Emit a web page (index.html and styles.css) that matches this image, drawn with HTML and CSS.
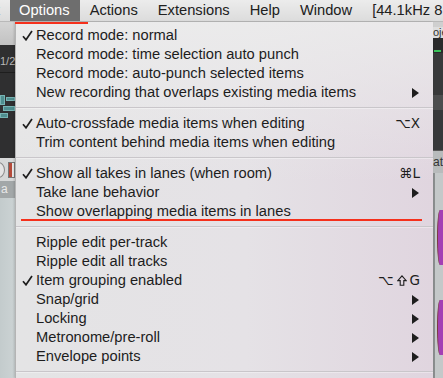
FILE: index.html
```html
<!DOCTYPE html>
<html>
<head>
<meta charset="utf-8">
<link rel="stylesheet" href="styles.css">
</head>
<body>
<div class="screen">
  <div class="menubar">
    <span class="mb-item mb-cut">k</span>
    <span class="mb-item mb-active">Options</span>
    <span class="mb-item">Actions</span>
    <span class="mb-item">Extensions</span>
    <span class="mb-item">Help</span>
    <span class="mb-item">Window</span>
    <span class="mb-item">[44.1kHz 8</span>
    <span class="mb-underline"></span>
  </div>
  <div class="main">
    <div class="left-strip">
      <div class="ls-top"></div>
      <div class="ls-dark">
        <div class="ls-frac">1/2</div>
        <div class="ls-teal">
          <span class="t1"></span><span class="t2"></span><span class="t3"></span><span class="t4"></span>
        </div>
      </div>
      <div class="ls-ctrl"><span class="ls-circle"></span><span class="ls-box"></span></div>
      <div class="ls-band">a</div>
      <div class="ls-rest"></div>
    </div>

    <div class="menu">
      <div class="row"><span class="chk"><svg width="11" height="11" viewBox="0 0 11 11"><path d="M1 6.2 L4 9.8 L10 1" fill="none" stroke="#1e1e1e" stroke-width="1.7"/></svg></span><span class="label">Record mode: normal</span></div>
      <div class="row"><span class="chk"></span><span class="label">Record mode: time selection auto punch</span></div>
      <div class="row"><span class="chk"></span><span class="label">Record mode: auto-punch selected items</span></div>
      <div class="row"><span class="chk"></span><span class="label">New recording that overlaps existing media items</span><span class="arrow"><svg width="7" height="10" viewBox="0 0 7 10"><polygon points="0,0 7,5 0,10" fill="#1e1e1e"/></svg></span></div>
      <div class="sep"></div>
      <div class="row"><span class="chk"><svg width="11" height="11" viewBox="0 0 11 11"><path d="M1 6.2 L4 9.8 L10 1" fill="none" stroke="#1e1e1e" stroke-width="1.7"/></svg></span><span class="label">Auto-crossfade media items when editing</span><span class="key">⌥X</span></div>
      <div class="row"><span class="chk"></span><span class="label">Trim content behind media items when editing</span></div>
      <div class="sep"></div>
      <div class="row"><span class="chk"><svg width="11" height="11" viewBox="0 0 11 11"><path d="M1 6.2 L4 9.8 L10 1" fill="none" stroke="#1e1e1e" stroke-width="1.7"/></svg></span><span class="label">Show all takes in lanes (when room)</span><span class="key">⌘L</span></div>
      <div class="row"><span class="chk"></span><span class="label">Take lane behavior</span><span class="arrow"><svg width="7" height="10" viewBox="0 0 7 10"><polygon points="0,0 7,5 0,10" fill="#1e1e1e"/></svg></span></div>
      <div class="row row-marked"><span class="chk"></span><span class="label">Show overlapping media items in lanes</span><span class="red-mark"></span></div>
      <div class="sep"></div>
      <div class="row"><span class="chk"></span><span class="label">Ripple edit per-track</span></div>
      <div class="row"><span class="chk"></span><span class="label">Ripple edit all tracks</span></div>
      <div class="row"><span class="chk"><svg width="11" height="11" viewBox="0 0 11 11"><path d="M1 6.2 L4 9.8 L10 1" fill="none" stroke="#1e1e1e" stroke-width="1.7"/></svg></span><span class="label">Item grouping enabled</span><span class="key">⌥<svg class="shift" width="10" height="11" viewBox="0 0 10 11"><path d="M5 0.8 L9.2 5.6 L6.8 5.6 L6.8 10.2 L3.2 10.2 L3.2 5.6 L0.8 5.6 Z" fill="none" stroke="#1e1e1e" stroke-width="1.1" stroke-linejoin="miter"/></svg>G</span></div>
      <div class="row"><span class="chk"></span><span class="label">Snap/grid</span><span class="arrow"><svg width="7" height="10" viewBox="0 0 7 10"><polygon points="0,0 7,5 0,10" fill="#1e1e1e"/></svg></span></div>
      <div class="row"><span class="chk"></span><span class="label">Locking</span><span class="arrow"><svg width="7" height="10" viewBox="0 0 7 10"><polygon points="0,0 7,5 0,10" fill="#1e1e1e"/></svg></span></div>
      <div class="row"><span class="chk"></span><span class="label">Metronome/pre-roll</span><span class="arrow"><svg width="7" height="10" viewBox="0 0 7 10"><polygon points="0,0 7,5 0,10" fill="#1e1e1e"/></svg></span></div>
      <div class="row"><span class="chk"></span><span class="label">Envelope points</span><span class="arrow"><svg width="7" height="10" viewBox="0 0 7 10"><polygon points="0,0 7,5 0,10" fill="#1e1e1e"/></svg></span></div>
      <div class="sep"></div>
    </div>

    <div class="right-strip">
      <div class="rs-top"></div>
      <div class="rs-tab">oje</div>
      <div class="rs-wave"><span class="rs-green"></span></div>
      <div class="rs-d1"></div>
      <div class="rs-d2"></div>
      <div class="rs-d3"></div>
      <div class="rs-at">at</div>
      <div class="rs-lanes">
        <span class="purple p1"></span>
        <span class="purple p2"></span>
      </div>
    </div>
  </div>
</div>
</body>
</html>
```

FILE: styles.css
```css
html, body {
  margin: 0;
  padding: 0;
  background: #c9cfd0;
}

.screen {
  width: 443px;
  height: 378px;
  overflow: hidden;
  font-family: "Liberation Sans", Arial, sans-serif;
  color: #1d1d1d;
  display: flex;
  flex-direction: column;
}

/* ---------- menubar ---------- */
.menubar {
  position: relative;
  height: 22px;
  flex: 0 0 22px;
  display: flex;
  align-items: stretch;
  background: linear-gradient(#ececec, #dcdcdc);
  border-bottom: 1px solid #b9b9b9;
  box-sizing: border-box;
  font-size: 14.7px;
  white-space: nowrap;
}

.mb-item {
  padding: 0 10px;
  line-height: 21px;
  color: #202020;
}

.mb-cut {
  width: 15px;
  box-sizing: border-box;
  padding: 0 10px 0 0;
  text-align: right;
  overflow: hidden;
  direction: rtl;
}

.mb-active {
  padding: 0 10px 0 9px;
  background: #6e6e6e;
  color: #fff;
}

.mb-underline {
  position: absolute;
  left: 15px;
  top: 22px;
  width: 73px;
  height: 2px;
  background: #f5301c;
  z-index: 3;
}

/* ---------- main ---------- */
.main {
  flex: 1;
  display: flex;
  min-height: 0;
}

/* left strip */
.left-strip {
  width: 15px;
  flex: 0 0 15px;
  display: flex;
  flex-direction: column;
  overflow: hidden;
}

.ls-top {
  height: 23px;
  background: linear-gradient(#d4d4d4, #c2c2c2);
}

.ls-dark {
  height: 113px;
  background: #2f2f30;
  display: flex;
  flex-direction: column;
}

.ls-frac {
  margin-top: 9px;
  height: 14px;
  font-size: 11px;
  line-height: 14px;
  color: #b8b8b8;
  border-bottom: 1px solid #1e1e1e;
  padding-bottom: 4px;
  white-space: nowrap;
}

.ls-teal {
  margin-top: 22px;
  height: 24px;
  position: relative;
}

.ls-teal span {
  position: absolute;
  background: #4f8e8f;
  border: 1px solid #76b3b3;
  box-sizing: border-box;
}

.ls-teal .t1 { left: 0; top: 0; width: 5px; height: 10px; }
.ls-teal .t2 { left: 6px; top: 2px; width: 9px; height: 4px; }
.ls-teal .t3 { left: 3px; top: 11px; width: 12px; height: 5px; }
.ls-teal .t4 { left: 0; top: 18px; width: 8px; height: 5px; }

.ls-ctrl {
  height: 23px;
  background: #d6d8d8;
  display: flex;
  align-items: center;
  gap: 3px;
}

.ls-circle {
  width: 14px;
  height: 14px;
  margin-left: -9px;
  border-radius: 50%;
  border: 1px solid #8a8a8a;
  background: #e4e4e4;
}

.ls-box {
  width: 6px;
  height: 14px;
  border: 1px solid #777;
  background: #e7e7e7;
  box-shadow: inset 3px 0 0 #b44a3a;
}

.ls-band {
  height: 17px;
  background: #a2a7a8;
  color: #e9e9e9;
  font-size: 12px;
  line-height: 17px;
  padding-left: 1px;
}

.ls-rest {
  flex: 1;
  background: linear-gradient(90deg, #c3cbcc, #ccd3d4);
}

/* ---------- dropdown menu ---------- */
.menu {
  width: 418px;
  flex: 0 0 418px;
  box-sizing: border-box;
  padding-top: 4px;
  background:
    linear-gradient(180deg, rgba(236,236,236,0.85) 0%, rgba(236,236,236,0) 45%),
    linear-gradient(90deg, #e4e4e5 0%, #e5e2e6 55%, #e0d5df 100%);
  border-left: 1px solid #b4b4b4;
  box-shadow: -1px 0 2px rgba(0,0,0,0.15);
  display: flex;
  flex-direction: column;
  font-size: 14.7px;
  z-index: 2;
}

.row {
  position: relative;
  height: 19px;
  flex: 0 0 19px;
  display: flex;
  align-items: center;
  padding-right: 13px;
  white-space: nowrap;
}

.chk {
  width: 20px;
  flex: 0 0 20px;
  padding-left: 6px;
  box-sizing: border-box;
  display: flex;
  align-items: center;
}

.label {
  flex: 1;
  line-height: 19px;
  color: #1d1d1d;
}

.key {
  display: flex;
  align-items: center;
  gap: 2px;
  font-family: "DejaVu Sans", sans-serif;
  font-size: 13.5px;
  line-height: 19px;
  color: #1d1d1d;
}

.shift {
  margin: 0 1px;
}

.arrow {
  display: flex;
  align-items: center;
  padding-right: 1px;
}

.red-mark {
  position: absolute;
  left: 5px;
  top: 17px;
  width: 401px;
  height: 2px;
  background: #f5301c;
}

.sep {
  height: 12px;
  flex: 0 0 12px;
  position: relative;
}

.sep::after {
  content: "";
  position: absolute;
  left: 0;
  right: 0;
  top: 5px;
  height: 1px;
  background: #c9c6ca;
  box-shadow: 0 1px 0 rgba(255,255,255,0.35);
}

/* ---------- right strip ---------- */
.right-strip {
  flex: 1;
  display: flex;
  flex-direction: column;
  overflow: hidden;
  min-width: 0;
}

.rs-top { height: 5px; background: #cfcfcf; }

.rs-tab {
  height: 11px;
  background: #dedede;
  font-size: 11px;
  line-height: 11px;
  color: #333;
  overflow: hidden;
  white-space: nowrap;
}

.rs-wave {
  height: 15px;
  background: #2a2a2b;
  position: relative;
}

.rs-green {
  position: absolute;
  left: 1px;
  bottom: 1px;
  width: 7px;
  height: 2px;
  background: #39c35a;
}

.rs-d1 { height: 42px; background: #38393a; }
.rs-d2 { height: 15px; background: #4c4d4e; }
.rs-d3 { height: 40px; background: #37383a; border-bottom: 1px solid #5a5a5a; }

.rs-at {
  height: 22px;
  background: #b8bbbc;
  font-size: 12px;
  line-height: 22px;
  color: #333;
  white-space: nowrap;
  overflow: hidden;
}

.rs-lanes {
  flex: 1;
  background: linear-gradient(90deg, #8a8d8e 0, #8a8d8e 2px, #c4c8c9 2px);
  position: relative;
}

.purple {
  position: absolute;
  left: 4px;
  width: 5px;
  background: #a43fb4;
  border-left: 1px solid #7a3a40;
  border-radius: 50% 0 0 50%;
}

.p1 { top: 37px; height: 55px; }
.p2 { top: 127px; height: 55px; }
```
